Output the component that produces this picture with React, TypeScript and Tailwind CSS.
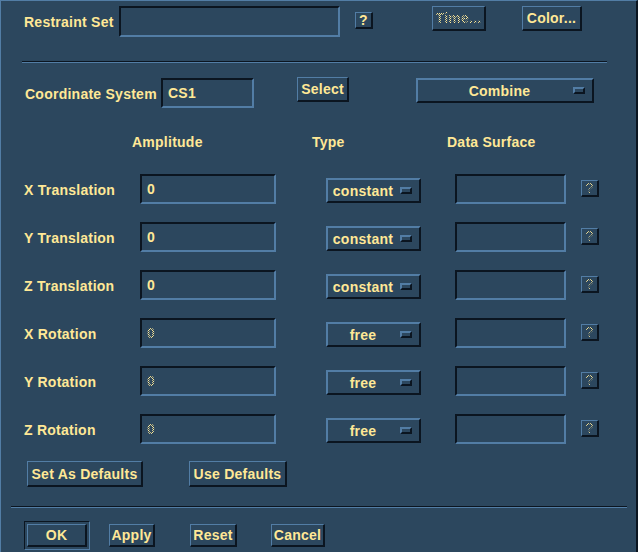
import React from 'react';

// Motif-style bevel helpers
const sunken = 'border-2 border-t-[#0b1520] border-l-[#0b1520] border-b-[#527da5] border-r-[#527da5] bg-[#2c475e]';
const raised = 'border border-t-[#527da5] border-l-[#527da5] border-b-[#0b1520] border-r-[#0b1520] border-b-2 border-r-2';
const raisedThick = 'border-2 border-t-[#527da5] border-l-[#527da5] border-b-[#0b1520] border-r-[#0b1520]';
const stipple =
  'bg-[conic-gradient(#ffe896_25%,transparent_0_50%,#ffe896_0_75%,transparent_0)] bg-[length:2px_2px] bg-clip-text text-transparent';

function Field({ w, value, dim }: { w: string; value?: string; dim?: boolean }) {
  return (
    <div className={`${w} h-[30px] ${sunken} flex items-center pl-[5px]`}>
      {value && <span className={dim ? stipple : ''}>{value}</span>}
    </div>
  );
}

function Button({ label, className = '', dim }: { label: string; className?: string; dim?: boolean }) {
  return (
    <div className={`${raised} flex items-center justify-center ${className}`}>
      <span className={dim ? stipple : ''}>{label}</span>
    </div>
  );
}

function OptionMenu({ label, className = '' }: { label: string; className?: string }) {
  return (
    <div className={`${raisedThick} h-[25px] flex items-center ${className}`}>
      <span className="flex-1 text-center">{label}</span>
      <div className={`${raisedThick} w-[12px] h-[7px] mr-[7px] ml-[2px]`} />
    </div>
  );
}

const rows = [
  { label: 'X Translation', value: '0', type: 'constant' },
  { label: 'Y Translation', value: '0', type: 'constant' },
  { label: 'Z Translation', value: '0', type: 'constant' },
  { label: 'X Rotation', value: '0', type: 'free', dim: true },
  { label: 'Y Rotation', value: '0', type: 'free', dim: true },
  { label: 'Z Rotation', value: '0', type: 'free', dim: true },
];

export default function App() {
  return (
    <div
      className="w-[638px] h-[552px] bg-[#2c475e] border-t border-l border-t-[#527da5] border-l-[#527da5] border-r-2 border-r-[#0b1520] text-[#ffe896] text-[14px] tracking-[0.25px] font-bold leading-none overflow-hidden"
      style={{ fontFamily: '"Liberation Sans", Arial, sans-serif' }}
    >
      {/* Restraint set row */}
      <div className="flex items-start pt-[5px] pl-[23px]">
        <div className="w-[95px] h-[31px] flex items-center">Restraint Set</div>
        <div className={`w-[221px] h-[31px] ${sunken}`} />
        <Button label="?" className="ml-[15px] mt-[6px] w-[18px] h-[17px]" />
        <Button label="Time..." dim className="ml-[59px] w-[54px] h-[25px]" />
        <Button label="Color..." className="ml-[36px] w-[60px] h-[25px]" />
      </div>

      <div className="mt-[24px] ml-[21px] w-[585px] border-t border-t-[#0b1520] border-b border-b-[#527da5]" />

      {/* Coordinate system row */}
      <div className="flex items-start mt-[15px] pl-[24px]">
        <div className="w-[136px] h-[30px] pt-[2px] flex items-center">Coordinate System</div>
        <div className={`w-[93px] h-[30px] ${sunken} flex items-center pl-[5px]`}>CS1</div>
        <Button label="Select" className="ml-[43px] -mt-[1px] w-[52px] h-[25px]" />
        <OptionMenu label="Combine" className="ml-[67px] w-[178px] pl-[10px]" />
      </div>

      {/* Column headers */}
      <div className="flex mt-[25px] h-[17px] items-center">
        <div className="ml-[131px] w-[180px]">Amplitude</div>
        <div className="w-[135px]">Type</div>
        <div>Data Surface</div>
      </div>

      {/* Component rows */}
      <div className="flex flex-col gap-[18px] mt-[24px]">
        {rows.map((r) => (
          <div key={r.label} className="flex items-start pl-[23px]">
            <div className="w-[116px] h-[30px] pt-[2px] flex items-center">{r.label}</div>
            <Field w="w-[136px]" value={r.value} dim={r.dim} />
            <OptionMenu label={r.type} className="ml-[50px] mt-[4px] w-[95px]" />
            <Field w="w-[111px] ml-[34px]" />
            <Button label="?" dim className="ml-[15px] mt-[6px] w-[18px] h-[17px] font-normal" />
          </div>
        ))}
      </div>

      {/* Defaults */}
      <div className="flex mt-[17px] pl-[26px]">
        <Button label="Set As Defaults" className="w-[116px] h-[26px]" />
        <Button label="Use Defaults" className="ml-[46px] w-[98px] h-[26px]" />
      </div>

      <div className="mt-[19px] ml-[10px] w-[616px] border-t border-t-[#0b1520] border-b border-b-[#527da5]" />

      {/* Action buttons */}
      <div className="flex items-center mt-[13px] pl-[23px]">
        <div className="w-[66px] h-[29px] border border-t-[#0b1520] border-l-[#0b1520] border-b-[#527da5] border-r-[#527da5] p-[2px]">
          <Button label="OK" className="w-full h-full" />
        </div>
        <Button label="Apply" className="ml-[19px] w-[46px] h-[23px]" />
        <Button label="Reset" className="ml-[35px] w-[47px] h-[23px]" />
        <Button label="Cancel" className="ml-[34px] w-[54px] h-[23px]" />
      </div>
    </div>
  );
}
